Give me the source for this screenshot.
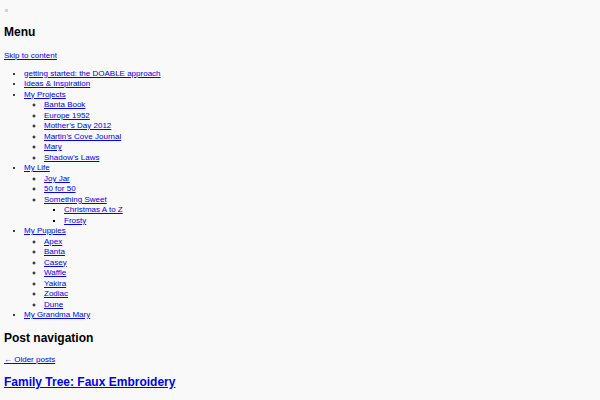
const menu = [
  { label: 'getting started: the DOABLE approach' },
  { label: 'Ideas & Inspiration' },
  {
    label: 'My Projects',
    children: [
      { label: 'Banta Book' },
      { label: 'Europe 1952' },
      { label: 'Mother’s Day 2012' },
      { label: 'Martin’s Cove Journal' },
      { label: 'Mary' },
      { label: 'Shadow’s Laws' },
    ],
  },
  {
    label: 'My Life',
    children: [
      { label: 'Joy Jar' },
      { label: '50 for 50' },
      {
        label: 'Something Sweet',
        children: [{ label: 'Christmas A to Z' }, { label: 'Frosty' }],
      },
    ],
  },
  {
    label: 'My Puppies',
    children: [
      { label: 'Apex' },
      { label: 'Banta' },
      { label: 'Casey' },
      { label: 'Waffle' },
      { label: 'Yakira' },
      { label: 'Zodiac' },
      { label: 'Dune' },
    ],
  },
  { label: 'My Grandma Mary' },
]

type Item = { label: string; children?: Item[] }

const bullets = ['list-disc', 'list-[circle]', 'list-[square]']

function MenuList({ items, depth = 0 }: { items: Item[]; depth?: number }) {
  return (
    <ul className={`${bullets[depth] ?? 'list-disc'} pl-[20px]`}>
      {items.map((item) => (
        <li key={item.label}>
          <a href="#" className="text-[#0000ee] underline">
            {item.label}
          </a>
          {item.children && <MenuList items={item.children} depth={depth + 1} />}
        </li>
      ))}
    </ul>
  )
}

export default function App() {
  return (
    <div
      className="min-h-[400px] bg-[#f9f9f9] px-[4px] pt-[8px] text-[8px] leading-[10.5px] text-black"
      style={{ fontFamily: '"Liberation Sans", Arial, sans-serif' }}
    >
      <div className="ml-[1px] mt-[1px] h-[3px] w-[3px] bg-[#d4d4d4]" />

      <h2 className="mt-[13px] text-[12px] font-bold leading-[14px]">Menu</h2>
      <a href="#" className="mt-[12px] block w-fit text-[#0000ee] underline">
        Skip to content
      </a>

      <nav className="mt-[7px]">
        <MenuList items={menu} />
      </nav>

      <h2 className="mt-[10px] text-[12px] font-bold leading-[14px]">Post navigation</h2>
      <a href="#" className="mt-[10px] block w-fit text-[#0000ee] underline">
        ← Older posts
      </a>

      <h2 className="mt-[10px] text-[12px] font-bold leading-[14px]">
        <a href="#" className="text-[#0000ee] underline">
          Family Tree: Faux Embroidery
        </a>
      </h2>
    </div>
  )
}
